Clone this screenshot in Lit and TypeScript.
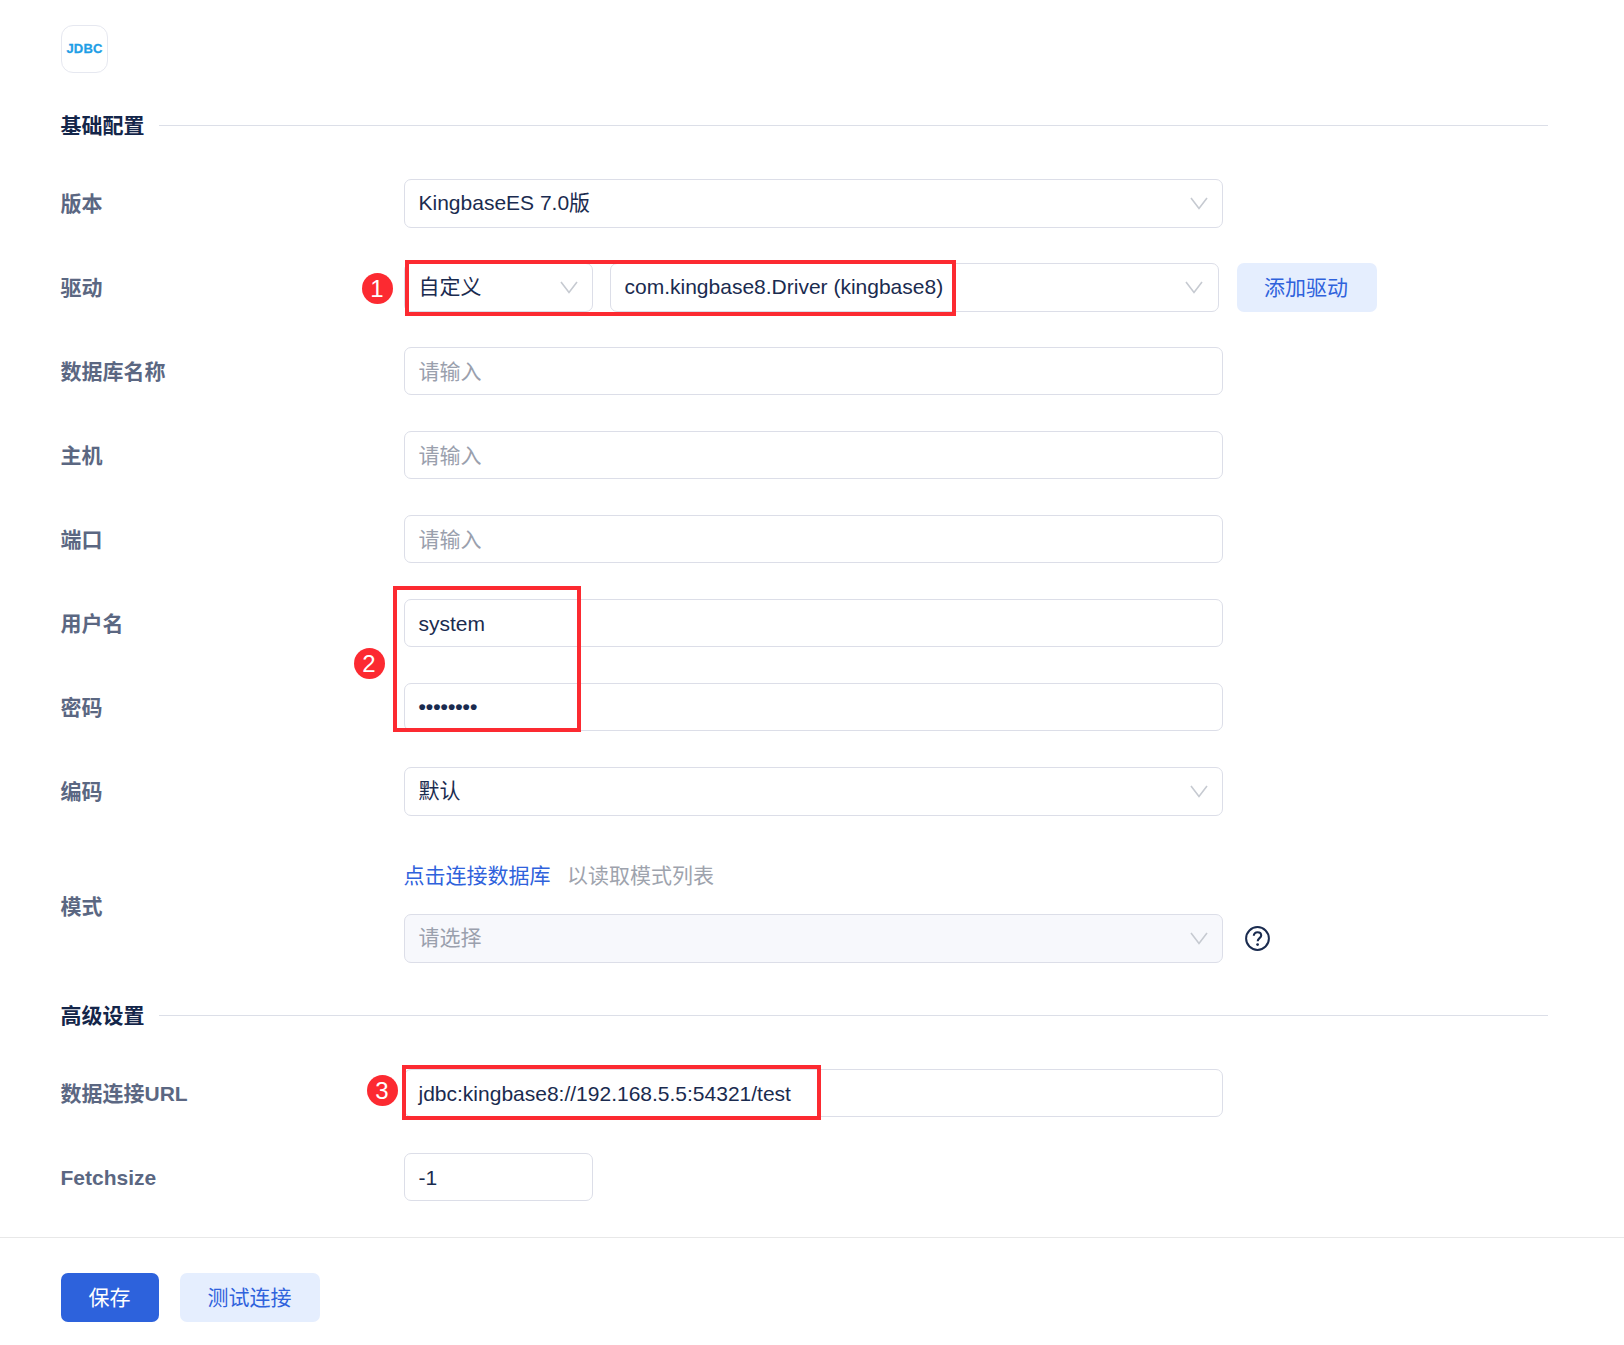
import { LitElement, html, css } from "lit";
import { customElement } from "lit/decorators.js";

const chevron = html`<svg class="chev" viewBox="0 0 18 13" width="18" height="13" aria-hidden="true"><path d="M1 1l8 10.5L17 1" fill="none" stroke="#c6cad1" stroke-width="1.6"/></svg>`;

@customElement("app-root")
export class AppRoot extends LitElement {
  static styles = css`
    :host { display: block; position: relative; width: 1624px; height: 1345px; background: #fff; overflow: hidden;
      font-family: "Liberation Sans", "Noto Sans CJK SC", sans-serif; font-size: 21px; color: #1a2b4f; }
    .body { padding: 25px 76px 0 61px; }
    .logo { box-sizing: border-box; width: 47px; height: 48px; border: 1px solid #e6e8f0; border-radius: 12px; padding-bottom: 1px; display: flex; align-items: center; justify-content: center;
      font-size: 13px; font-weight: 700; color: #1e9ee6; letter-spacing: 0.2px; -webkit-text-stroke: 0.3px #1e9ee6; margin-bottom: 34px; }
    .section { display: flex; align-items: center; height: 36px; gap: 14px; margin-bottom: 36px; font-weight: 700; color: #14264a; line-height: 36px; margin-left: -0.5px; }
    .section span { padding-top: 1.5px; }
    .section.second { margin-top: 35px; }
    .section i { flex: 1; height: 1px; background: #dcdfe8; }
    .row { display: flex; align-items: center; height: 48px; margin-bottom: 36px; }
    .row.last { margin-bottom: 0; }
    .row.tall { height: 111px; }
    .label { width: 343px; flex: none; font-weight: 700; color: #5b6782; padding-bottom: 2px; margin-left: -0.5px; margin-right: 0.5px; }
    .row.tall .label { padding-bottom: 4px; }
    .label.latin { padding-bottom: 0; padding-top: 1px; }
    .field { box-sizing: border-box; height: 48px; width: 819px; flex: none; border: 1px solid #dcdee8; border-radius: 7px; padding: 0 14px 0 13.5px; display: flex; align-items: center; justify-content: space-between; background: #fff; white-space: nowrap; }
    .field.choice { height: 49px; align-self: flex-start; }
    .cjk { padding-bottom: 2px; }
    .sel { padding-bottom: 5px; }
    .sel-latin { padding-bottom: 2px; }
    .sel-ph { padding-bottom: 3.5px; color: #9aa0ad; }
    .latin { padding-top: 1.5px; }
    .ph { color: #9aa0ad; }
    .small { width: 189px; }
    .driver { width: 609px; margin-left: 17px; padding-right: 15px; }
    .btn { box-sizing: border-box; height: 49px; flex: none; align-self: flex-start; border-radius: 7px; padding-bottom: 3px; display: flex; align-items: center; justify-content: center; background: #e5eefe; color: #2f62dc; }
    .add { width: 140px; margin-left: 18px; padding-right: 2px; }
    .disabled { background: #f7f8fc; }
    .dots { font-weight: 700; }
    .mode { display: flex; flex-direction: column; }
    .mode-text { box-sizing: border-box; height: 49px; margin-bottom: 14px; padding-bottom: 2px; margin-left: -0.5px; display: flex; align-items: center; gap: 16.5px; color: #9ea3ad; }
    .link { color: #2f62dc; }
    .mode-line { display: flex; align-items: center; height: 49px; }
    .help { margin-left: 22px; display: block; }
    .footer { position: absolute; left: 0; right: 0; top: 1237px; border-top: 1px solid #e8e8e8; padding: 35px 61px 0; display: flex; gap: 21px; }
    .save { width: 98px; background: #2d62dc; color: #fff; padding-right: 1px; }
    .test { width: 140px; padding-right: 1px; }
    .box { position: absolute; box-sizing: border-box; border: 4px solid #fc2a31; }
    .badge { position: absolute; width: 31px; height: 31px; border-radius: 50%; background: #fc2a31; color: #fff; font-size: 24px; display: flex; align-items: center; justify-content: center; }
    .b1 { left: 405px; top: 260px; width: 551px; height: 56px; }
    .b2 { left: 393px; top: 586px; width: 188px; height: 146px; }
    .b3 { left: 402px; top: 1065px; width: 419px; height: 55px; }
    .n1 { left: 361.5px; top: 273px; }
    .n2 { left: 353.5px; top: 648px; }
    .n3 { left: 366.5px; top: 1075px; }
  `;

  private input(label: string, value: string, kind: string) {
    return html`<div class="row"><div class="label">${label}</div><div class="field"><span class=${kind}>${value}</span></div></div>`;
  }

  private select(label: string, value: string) {
    return html`<div class="row"><div class="label">${label}</div><div class="field choice"><span class="sel">${value}</span>${chevron}</div></div>`;
  }

  render() {
    return html`
      <div class="body">
        <div class="logo">JDBC</div>
        <div class="section"><span>基础配置</span><i></i></div>
        ${this.select("版本", "KingbaseES 7.0版")}
        <div class="row">
          <div class="label">驱动</div>
          <div class="field choice small"><span class="sel">自定义</span>${chevron}</div>
          <div class="field choice driver"><span class="sel-latin">com.kingbase8.Driver (kingbase8)</span>${chevron}</div>
          <div class="btn add">添加驱动</div>
        </div>
        ${this.input("数据库名称", "请输入", "cjk ph")}
        ${this.input("主机", "请输入", "cjk ph")}
        ${this.input("端口", "请输入", "cjk ph")}
        ${this.input("用户名", "system", "latin")}
        <div class="row"><div class="label">密码</div><div class="field"><span class="dots">••••••••</span></div></div>
        ${this.select("编码", "默认")}
        <div class="row last tall">
          <div class="label">模式</div>
          <div class="mode">
            <div class="mode-text"><span class="link">点击连接数据库</span><span>以读取模式列表</span></div>
            <div class="mode-line">
              <div class="field choice disabled"><span class="sel-ph">请选择</span>${chevron}</div>
              <svg class="help" viewBox="0 0 25 25" width="25" height="25" aria-hidden="true">
                <circle cx="12.5" cy="12.5" r="11.4" fill="none" stroke="#1a2b4f" stroke-width="2"/>
                <path d="M8.8 9.8c0-2.2 1.6-3.6 3.7-3.6s3.7 1.3 3.7 3.3c0 2.6-3.5 2.8-3.5 5.7" fill="none" stroke="#1a2b4f" stroke-width="2.1"/>
                <circle cx="12.6" cy="18.6" r="1.4" fill="#1a2b4f"/>
              </svg>
            </div>
          </div>
        </div>
        <div class="section second"><span>高级设置</span><i></i></div>
        ${this.input("数据连接URL", "jdbc:kingbase8://192.168.5.5:54321/test", "latin")}
        <div class="row last"><div class="label latin">Fetchsize</div><div class="field small"><span class="latin">-1</span></div></div>
      </div>
      <div class="footer">
        <div class="btn save">保存</div>
        <div class="btn test">测试连接</div>
      </div>
      <div class="box b1"></div>
      <div class="box b2"></div>
      <div class="box b3"></div>
      <div class="badge n1">1</div>
      <div class="badge n2">2</div>
      <div class="badge n3">3</div>
    `;
  }
}
